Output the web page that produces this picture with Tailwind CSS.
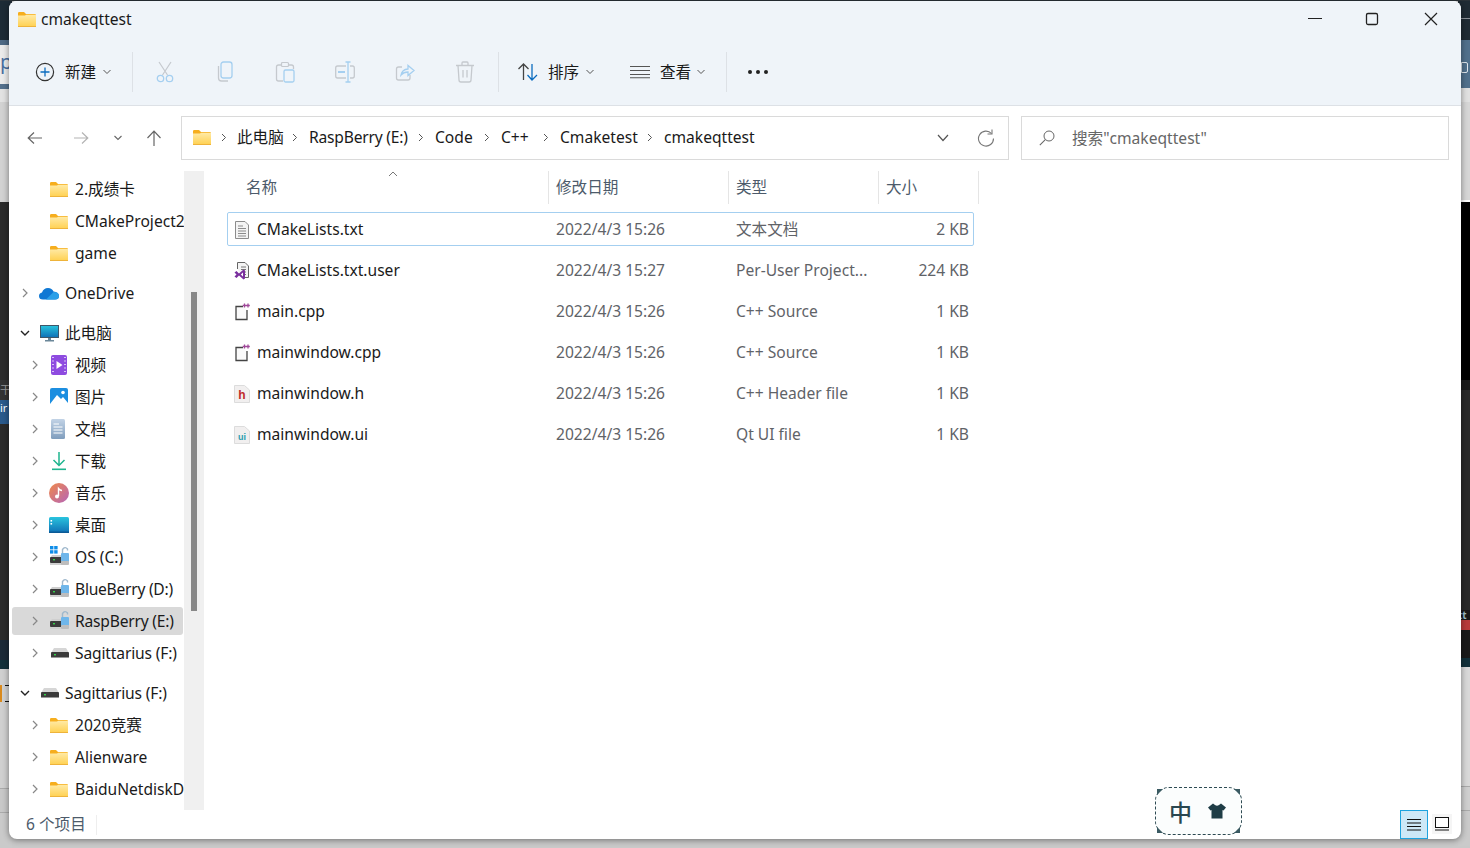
<!DOCTYPE html>
<html lang="zh">
<head>
<meta charset="utf-8">
<title>cmakeqttest</title>
<script src="https://cdn.jsdelivr.net/npm/@tailwindcss/browser@4"></script>
</head>
<body class="m-0 overflow-hidden">
<svg width="0" height="0" class="absolute">
  <defs>
    <linearGradient id="fold" x1="0" y1="0" x2="0" y2="1"><stop offset="0" stop-color="#ffeaa6"/><stop offset="1" stop-color="#ffd04f"/></linearGradient>
    <linearGradient id="scr" x1="0" y1="0" x2="0" y2="1"><stop offset="0" stop-color="#29c4de"/><stop offset="1" stop-color="#0f6fb5"/></linearGradient>
    <linearGradient id="mus" x1="0" y1="0" x2="1" y2="1"><stop offset="0" stop-color="#f0894a"/><stop offset="1" stop-color="#b565b8"/></linearGradient>
    <linearGradient id="doc" x1="0" y1="0" x2="0" y2="1"><stop offset="0" stop-color="#c2d3e6"/><stop offset="1" stop-color="#7f9dbd"/></linearGradient>
    <symbol id="folder" viewBox="0 0 18 15">
      <path d="M0 1.2Q0 0 1.2 0H6L8 2H16.8Q18 2 18 3.2V5H0Z" fill="#f6ae1e"/>
      <path d="M0 3.5H7L8.2 2.8H18V13.8Q18 15 16.8 15H1.2Q0 15 0 13.8Z" fill="url(#fold)"/>
      <rect x="0" y="14" width="18" height="1" fill="#eeb33a"/>
    </symbol>
    <symbol id="drive" viewBox="0 0 18 10">
      <path d="M3 0H15L18 5H0Z" fill="#d6d6d6"/>
      <rect x="0" y="4" width="18" height="6" rx="1" fill="#3b3b3b"/>
      <rect x="3" y="6" width="2" height="1.4" fill="#35d04a"/>
      <rect x="0" y="9" width="18" height="1" fill="#999"/>
    </symbol>
    <symbol id="lock" viewBox="0 0 20 20">
      <path d="M2 9H16L18 12V19H0V12Z" fill="#cfcfcf"/>
      <rect x="0" y="11" width="14" height="6" rx="1" fill="#3b3b3b"/>
      <rect x="3" y="13" width="2" height="1.4" fill="#35d04a"/>
      <rect x="11" y="7" width="8" height="9" rx="1" fill="#6fb6ea"/>
      <rect x="11" y="15" width="8" height="4" rx="1" fill="#bdbdbd"/>
      <path d="M12.5 7V3.5Q15 0 17.5 3V4.5" fill="none" stroke="#9fb8cc" stroke-width="1.4"/>
    </symbol>
  </defs>
</svg>

<div class="relative w-[1470px] h-[848px] overflow-hidden bg-[#c9c9c9] font-['Noto_Sans','Noto_Sans_CJK_SC',sans-serif]">
  <!-- desktop behind the window -->
  <div class="absolute inset-0 flex justify-between">
    <div class="w-[12px] flex flex-col overflow-hidden">
      <div class="h-[40px] bg-[#1d2b36]"></div>
      <div class="h-[5px] bg-[#4f6a85]"></div>
      <div class="h-[39px] bg-[#ebebeb] text-[20px] leading-[34px] text-[#4a6fa0]">p</div>
      <div class="h-[5px] bg-[#54708c]"></div>
      <div class="h-[13px] bg-[#e2e2e2]"></div>
      <div class="h-[100px] bg-[#d2d2d2]"></div>
      <div class="h-[178px] bg-[#2b2b2b]"></div>
      <div class="h-[20px] bg-[#333] text-[#999] text-[11px] leading-[20px]">干</div>
      <div class="h-[24px] bg-[#2a5a8c] text-white text-[11px] leading-[16px]">ir</div>
      <div class="h-[216px] bg-[#2b2b2b]"></div>
      <div class="h-[20px] bg-[#1c2a38]"></div>
      <div class="h-[9px] bg-[#12303a]"></div>
      <div class="h-[119px] bg-[#d0d0d0] pt-[16px] flex items-start">
        <div class="w-[2px] h-[17px] bg-[#d98a1e]"></div>
        <div class="ml-[3px] w-[4px] h-[17px] border-y border-[#111]"></div>
      </div>
      <div class="h-[25px] bg-[#c8c8c8] border-y border-[#aaaaaa]"></div>
      <div class="h-[35px] bg-[#cacaca]"></div>
    </div>
    <div class="w-[12px] flex flex-col overflow-hidden">
      <div class="h-[19px] bg-[#1f2b34] border-b border-[#8a9097]"></div>
      <div class="h-[21px] bg-[#1f2b34]"></div>
      <div class="h-[48px] bg-[#51708c] pt-[22px] pl-[3px]">
        <div class="w-[7px] h-[11px] border border-[#dfe6ec] rounded-r-[2px]"></div>
      </div>
      <div class="h-[14px] bg-[#e0e0e0]"></div>
      <div class="h-[98px] bg-[#d6d6d6]"></div>
      <div class="h-[2px] bg-white"></div>
      <div class="h-[178px] bg-black"></div>
      <div class="h-[10px] bg-[#1a1a1a]"></div>
      <div class="h-[220px] bg-[#2a2a2a]"></div>
      <div class="h-[10px] bg-[#1a1a1a] text-[#9fc0d0] text-[10px] leading-[10px] font-bold">tt</div>
      <div class="h-[10px] bg-[#b83a3a]"></div>
      <div class="h-[28px] bg-[#1a1a1a]"></div>
      <div class="h-[9px] bg-[#12303a]"></div>
      <div class="h-[119px] bg-[#d8d8d8]"></div>
      <div class="h-[25px] bg-[#cfcfcf] border-y border-[#aaaaaa]"></div>
      <div class="h-[35px] bg-[#cacaca]"></div>
    </div>
  </div>
  <div class="absolute left-0 top-0 w-full h-[1px] bg-[#2a3238]"></div>

  <!-- window -->
  <div class="absolute left-[9px] top-[1px] w-[1452px] h-[838px] rounded-lg overflow-hidden bg-white flex flex-col shadow-[0_1px_6px_rgba(0,0,0,0.45)] text-[15.6px] text-[#1a1a1a]">
    <!-- header -->
    <div class="h-[105px] shrink-0 bg-[#eff4f9] border-b border-[#dde1e6] flex flex-col">
      <div class="h-[36px] flex items-center">
        <svg class="ml-[9px] w-[18px] h-[15px]"><use href="#folder"/></svg>
        <span class="ml-[5px] leading-[17px]">cmakeqttest</span>
        <div class="ml-auto flex items-center h-[36px]">
          <svg class="w-[60px] h-[36px]" viewBox="0 0 60 36"><path d="M25 17.5H39" stroke="#222" stroke-width="1.2"/></svg>
          <svg class="w-[58px] h-[36px]" viewBox="0 0 58 36"><rect x="23.5" y="12.5" width="11" height="11" rx="1.5" fill="none" stroke="#222" stroke-width="1.3"/></svg>
          <svg class="w-[60px] h-[36px] mr-0" viewBox="0 0 60 36"><path d="M24 12L36 24M36 12L24 24" stroke="#222" stroke-width="1.2"/></svg>
        </div>
      </div>
      <div class="flex-1 flex items-center pt-[2px]">
        <!-- new -->
        <div class="flex items-center w-[123px] pl-[26px] whitespace-nowrap">
          <svg class="w-[20px] h-[20px]" viewBox="0 0 20 20"><circle cx="10" cy="10" r="8.6" fill="none" stroke="#333" stroke-width="1.2"/><path d="M10 5.5V14.5M5.5 10H14.5" stroke="#0b6cbf" stroke-width="1.3"/></svg>
          <span class="ml-[10px] leading-[17px]">新建</span>
          <svg class="ml-[6px] w-[10px] h-[6px]" viewBox="0 0 10 6"><path d="M1.5 1L5 4.5L8.5 1" fill="none" stroke="#555" stroke-width="1"/></svg>
        </div>
        <div class="w-px h-[40px] bg-[#dde1e6]"></div>
        <!-- disabled actions -->
        <div class="flex ml-[2px]">
          <div class="w-[60px] flex justify-center"><svg class="w-[20px] h-[22px]" viewBox="0 0 20 22"><path d="M4 1L12.5 14M16 1L7.5 14" stroke="#c5c9ce" stroke-width="1.2" fill="none"/><circle cx="5.5" cy="17.5" r="3.2" fill="none" stroke="#a5cff0" stroke-width="1.3"/><circle cx="14.5" cy="17.5" r="3.2" fill="none" stroke="#a5cff0" stroke-width="1.3"/></svg></div>
          <div class="w-[60px] flex justify-center"><svg class="w-[20px] h-[22px]" viewBox="0 0 20 22"><path d="M3.5 5V17Q3.5 20 6.5 20H13" fill="none" stroke="#c5c9ce" stroke-width="1.3"/><rect x="6" y="1" width="11" height="16" rx="2.5" fill="none" stroke="#a5cff0" stroke-width="1.3"/></svg></div>
          <div class="w-[60px] flex justify-center"><svg class="w-[20px] h-[22px]" viewBox="0 0 20 22"><path d="M7 4H3.5Q1.5 4 1.5 6V18Q1.5 20 3.5 20H8M13 4H16.5Q18.5 4 18.5 6V8" fill="none" stroke="#c5c9ce" stroke-width="1.3"/><rect x="6.5" y="1.5" width="7" height="4" rx="1" fill="none" stroke="#c5c9ce" stroke-width="1.2"/><rect x="9" y="9" width="10" height="12" rx="1.5" fill="none" stroke="#a5cff0" stroke-width="1.3"/></svg></div>
          <div class="w-[60px] flex justify-center"><svg class="w-[20px] h-[22px]" viewBox="0 0 20 22"><path d="M11 5H2.5Q0.7 5 0.7 7V15Q0.7 17 2.5 17H11M15 5H17.5Q19.3 5 19.3 7V15Q19.3 17 17.5 17H15" fill="none" stroke="#c5c9ce" stroke-width="1.3"/><path d="M13 1V21M10.5 1H15.5M10.5 21H15.5" stroke="#a5cff0" stroke-width="1.3" fill="none"/><rect x="3" y="10" width="7" height="2" fill="#a5cff0"/></svg></div>
          <div class="w-[60px] flex justify-center"><svg class="w-[20px] h-[22px]" viewBox="0 0 20 22"><path d="M7 6H3.5Q1.5 6 1.5 8V17Q1.5 19 3.5 19H13Q15 19 15 17V14" fill="none" stroke="#c5c9ce" stroke-width="1.3"/><path d="M6 14Q7 8.5 13 8V4.5L19 9.5L13 14.5V11Q8.5 11 6 14Z" fill="none" stroke="#a5cff0" stroke-width="1.3"/></svg></div>
          <div class="w-[60px] flex justify-center"><svg class="w-[20px] h-[22px]" viewBox="0 0 20 22"><path d="M1 4.5H19M7 4.5V2Q7 1 8 1H12Q13 1 13 2V4.5M3 4.5L4 19Q4 21 6 21H14Q16 21 16 19L17 4.5M8 9V16.5M12 9V16.5" fill="none" stroke="#c5c9ce" stroke-width="1.3"/></svg></div>
        </div>
        <div class="ml-[3px] w-px h-[40px] bg-[#dde1e6]"></div>
        <!-- sort -->
        <div class="flex items-center w-[227px] pl-[18px] whitespace-nowrap">
          <svg class="w-[22px] h-[20px]" viewBox="0 0 22 20"><path d="M6.5 18V2M1.5 7L6.5 2L11.5 7" fill="none" stroke="#444" stroke-width="1.3"/><path d="M15 2V18M10.5 13L15 18L20 13" fill="none" stroke="#0b6cbf" stroke-width="1.3"/></svg>
          <span class="ml-[9px] w-[31px] leading-[17px]">排序</span>
          <svg class="ml-[6px] w-[10px] h-[6px]" viewBox="0 0 10 6"><path d="M1.5 1L5 4.5L8.5 1" fill="none" stroke="#555" stroke-width="1"/></svg>
          <svg class="ml-[35px] w-[20px] h-[14px]" viewBox="0 0 20 14"><path d="M0 1.5H20M0 5.5H20M0 9.5H20M0 12.8H20" stroke="#555" stroke-width="1.1"/></svg>
          <span class="ml-[10px] w-[31px] leading-[17px]">查看</span>
          <svg class="ml-[5px] w-[10px] h-[6px]" viewBox="0 0 10 6"><path d="M1.5 1L5 4.5L8.5 1" fill="none" stroke="#555" stroke-width="1"/></svg>
        </div>
        <div class="w-px h-[40px] bg-[#dde1e6]"></div>
        <svg class="ml-[20px] w-[22px] h-[6px]" viewBox="0 0 22 6"><circle cx="3" cy="3" r="2" fill="#222"/><circle cx="11" cy="3" r="2" fill="#222"/><circle cx="19" cy="3" r="2" fill="#222"/></svg>
      </div>
    </div>

    <!-- address row -->
    <div class="h-[65px] shrink-0 flex items-start pt-[10px]">
      <div class="w-[172px] h-[44px] flex items-center">
        <svg class="ml-[18px] w-[16px] h-[14px]" viewBox="0 0 16 14"><path d="M15 7H1.5M7 1.5L1.2 7L7 12.5" fill="none" stroke="#666" stroke-width="1.2"/></svg>
        <svg class="ml-[30px] w-[16px] h-[14px]" viewBox="0 0 16 14"><path d="M1 7H14.5M9 1.5L14.8 7L9 12.5" fill="none" stroke="#b4b4b4" stroke-width="1.2"/></svg>
        <svg class="ml-[24px] w-[10px] h-[6px]" viewBox="0 0 10 6"><path d="M1.5 1L5 4.5L8.5 1" fill="none" stroke="#666" stroke-width="1.1"/></svg>
        <svg class="ml-[23px] w-[16px] h-[16px]" viewBox="0 0 16 16"><path d="M8 16V1.5M1.5 8L8 1.2L14.5 8" fill="none" stroke="#666" stroke-width="1.2"/></svg>
      </div>
      <div class="w-[828px] h-[44px] border border-[#dadada] flex items-center pl-[11px] pb-[1px] leading-[17px] whitespace-nowrap">
        <svg class="w-[18px] h-[15px] mr-[10px]"><use href="#folder"/></svg>
        <svg class="w-[6px] h-[9px] mr-[10px]" viewBox="0 0 6 9"><path d="M1 1L4.5 4.5L1 8" fill="none" stroke="#555" stroke-width="1"/></svg>
        <span class="w-[50px]">此电脑</span>
        <svg class="w-[6px] h-[9px] mr-[11px] ml-[5px]" viewBox="0 0 6 9"><path d="M1 1L4.5 4.5L1 8" fill="none" stroke="#555" stroke-width="1"/></svg>
        <span class="w-[104px] tracking-[-0.2px]">RaspBerry (E:)</span>
        <svg class="w-[6px] h-[9px] mr-[11px] ml-[5px]" viewBox="0 0 6 9"><path d="M1 1L4.5 4.5L1 8" fill="none" stroke="#555" stroke-width="1"/></svg>
        <span class="w-[44px]">Code</span>
        <svg class="w-[6px] h-[9px] mr-[11px] ml-[5px]" viewBox="0 0 6 9"><path d="M1 1L4.5 4.5L1 8" fill="none" stroke="#555" stroke-width="1"/></svg>
        <span class="w-[37px]">C++</span>
        <svg class="w-[6px] h-[9px] mr-[11px] ml-[5px]" viewBox="0 0 6 9"><path d="M1 1L4.5 4.5L1 8" fill="none" stroke="#555" stroke-width="1"/></svg>
        <span class="w-[82px]">Cmaketest</span>
        <svg class="w-[6px] h-[9px] mr-[11px] ml-[5px]" viewBox="0 0 6 9"><path d="M1 1L4.5 4.5L1 8" fill="none" stroke="#555" stroke-width="1"/></svg>
        <span>cmakeqttest</span>
        <svg class="ml-auto w-[12px] h-[8px]" viewBox="0 0 12 8"><path d="M1 1L6 6.5L11 1" fill="none" stroke="#555" stroke-width="1.2"/></svg>
        <svg class="ml-[28px] mr-[13px] w-[18px] h-[18px]" viewBox="0 0 18 18"><path d="M14.5 4.5A7.5 7.5 0 1 0 16.5 9.5" fill="none" stroke="#777" stroke-width="1.1"/><path d="M15 0.5V5H10.5" fill="none" stroke="#777" stroke-width="1.1"/></svg>
      </div>
      <div class="ml-[12px] w-[428px] h-[44px] border border-[#dadada] flex items-center pl-[17px] text-[#666] leading-[17px]">
        <svg class="w-[16px] h-[16px]" viewBox="0 0 16 16"><circle cx="10" cy="6" r="5" fill="none" stroke="#666" stroke-width="1"/><path d="M6.3 9.7L0.8 15.2" stroke="#666" stroke-width="1.1"/></svg>
        <span class="ml-[17px]">搜索"cmakeqttest"</span>
      </div>
    </div>

    <!-- main -->
    <div class="h-[639px] shrink-0 flex">
      <!-- sidebar -->
      <div class="w-[175px] shrink-0 overflow-hidden pt-[2px] flex flex-col whitespace-nowrap leading-[17px]">
        <div class="h-[32px] flex items-center pl-[41px]"><svg class="w-[18px] h-[15px] mr-[7px] shrink-0"><use href="#folder"/></svg>2.成绩卡</div>
        <div class="h-[32px] flex items-center pl-[41px]"><svg class="w-[18px] h-[15px] mr-[7px] shrink-0"><use href="#folder"/></svg>CMakeProject2</div>
        <div class="h-[32px] flex items-center pl-[41px]"><svg class="w-[18px] h-[15px] mr-[7px] shrink-0"><use href="#folder"/></svg>game</div>

        <div class="h-[32px] mt-[8px] flex items-center pl-[13px]">
          <svg class="w-[6px] h-[10px] mr-[11px] shrink-0" viewBox="0 0 6 10"><path d="M1 1L5 5L1 9" fill="none" stroke="#888" stroke-width="1.2"/></svg>
          <svg class="w-[20px] h-[13px] mr-[6px] shrink-0" viewBox="0 0 20 13"><path d="M4 12.5Q0 12.5 0 9Q0 6 3 5.5Q4.5 1 9 1Q13 1 14.5 4.5Q20 5 20 9Q20 12.5 16 12.5Z" fill="#0f78d4"/><path d="M7 12.5L14.5 5Q20 5 20 9Q20 12.5 16 12.5Z" fill="#2a9fe8"/></svg>OneDrive
        </div>

        <div class="h-[32px] mt-[8px] flex items-center pl-[11px]">
          <svg class="w-[10px] h-[6px] mr-[10px] shrink-0" viewBox="0 0 10 6"><path d="M1 1L5 5L9 1" fill="none" stroke="#222" stroke-width="1.4"/></svg>
          <svg class="w-[19px] h-[17px] mr-[6px] shrink-0" viewBox="0 0 19 17"><rect x="0.5" y="0.5" width="18" height="12" fill="url(#scr)" stroke="#3f5668"/><rect x="8" y="13" width="3" height="2" fill="#6b8799"/><rect x="5" y="15" width="9" height="1.5" fill="#6b8799"/></svg>此电脑
        </div>
        <div class="h-[32px] flex items-center pl-[23px]">
          <svg class="w-[6px] h-[10px] mr-[12px] shrink-0" viewBox="0 0 6 10"><path d="M1 1L5 5L1 9" fill="none" stroke="#888" stroke-width="1.2"/></svg>
          <svg class="w-[16px] h-[20px] mr-[8px] ml-[1px] shrink-0" viewBox="0 0 16 20"><rect width="16" height="20" rx="2" fill="#8e4be0"/><path d="M5.5 6L11.5 10L5.5 14Z" fill="#fff"/><path d="M1 2.5H3M1 6H3M1 9.5H3M1 13H3M1 16.5H3M13 2.5H15M13 6H15M13 9.5H15M13 13H15M13 16.5H15" stroke="#d8c2f7" stroke-width="1.2"/></svg>视频
        </div>
        <div class="h-[32px] flex items-center pl-[23px]">
          <svg class="w-[6px] h-[10px] mr-[12px] shrink-0" viewBox="0 0 6 10"><path d="M1 1L5 5L1 9" fill="none" stroke="#888" stroke-width="1.2"/></svg>
          <svg class="w-[18px] h-[18px] mr-[7px] shrink-0" viewBox="0 0 18 18"><rect width="18" height="18" rx="2" fill="#1c8ee0"/><path d="M0 16L7 7L11 11L13 9L18 15V18H0Z" fill="#fff"/><circle cx="13" cy="4.5" r="1.8" fill="#fff"/></svg>图片
        </div>
        <div class="h-[32px] flex items-center pl-[23px]">
          <svg class="w-[6px] h-[10px] mr-[13px] shrink-0" viewBox="0 0 6 10"><path d="M1 1L5 5L1 9" fill="none" stroke="#888" stroke-width="1.2"/></svg>
          <svg class="w-[14px] h-[20px] mr-[10px] shrink-0" viewBox="0 0 14 20"><rect width="14" height="20" rx="1.5" fill="url(#doc)"/><path d="M2.5 5H8M2.5 8H11.5M2.5 11H11.5M2.5 14H11.5" stroke="#fff" stroke-width="1"/></svg>文档
        </div>
        <div class="h-[32px] flex items-center pl-[23px]">
          <svg class="w-[6px] h-[10px] mr-[14px] shrink-0" viewBox="0 0 6 10"><path d="M1 1L5 5L1 9" fill="none" stroke="#888" stroke-width="1.2"/></svg>
          <svg class="w-[14px] h-[20px] mr-[9px] shrink-0" viewBox="0 0 14 20"><path d="M7 1V14M1.5 9L7 14.5L12.5 9" fill="none" stroke="#1fb58f" stroke-width="1.5"/><rect y="17.5" width="14" height="1.6" fill="#1fb58f"/></svg>下载
        </div>
        <div class="h-[32px] flex items-center pl-[23px]">
          <svg class="w-[6px] h-[10px] mr-[11px] shrink-0" viewBox="0 0 6 10"><path d="M1 1L5 5L1 9" fill="none" stroke="#888" stroke-width="1.2"/></svg>
          <svg class="w-[20px] h-[20px] mr-[6px] shrink-0" viewBox="0 0 20 20"><circle cx="10" cy="10" r="10" fill="url(#mus)"/><path d="M9.5 13V5.5Q11 7.5 13 7.5" fill="none" stroke="#fff" stroke-width="1.4"/><circle cx="8" cy="13.5" r="2" fill="#fff"/></svg>音乐
        </div>
        <div class="h-[32px] flex items-center pl-[23px]">
          <svg class="w-[6px] h-[10px] mr-[11px] shrink-0" viewBox="0 0 6 10"><path d="M1 1L5 5L1 9" fill="none" stroke="#888" stroke-width="1.2"/></svg>
          <svg class="w-[20px] h-[16px] mr-[6px] shrink-0" viewBox="0 0 20 16"><rect width="20" height="16" rx="1.5" fill="url(#scr)"/><rect x="1.5" y="3" width="1.6" height="1.6" fill="#fff"/><rect x="1.5" y="6" width="1.6" height="1.6" fill="#fff"/><rect y="14.5" width="20" height="1.5" fill="#0b5a96"/></svg>桌面
        </div>
        <div class="h-[32px] flex items-center pl-[23px]">
          <svg class="w-[6px] h-[10px] mr-[12px] shrink-0" viewBox="0 0 6 10"><path d="M1 1L5 5L1 9" fill="none" stroke="#888" stroke-width="1.2"/></svg>
          <svg class="w-[20px] h-[20px] mr-[5px] -mt-[3px] shrink-0" viewBox="0 0 20 20"><rect width="3.4" height="3.4" fill="#0f8de8"/><rect x="4.2" width="3.4" height="3.4" fill="#0f8de8"/><rect y="4.2" width="3.4" height="3.4" fill="#0f8de8"/><rect x="4.2" y="4.2" width="3.4" height="3.4" fill="#0f8de8"/><use href="#lock"/></svg>OS (C:)
        </div>
        <div class="h-[32px] flex items-center pl-[23px]">
          <svg class="w-[6px] h-[10px] mr-[12px] shrink-0" viewBox="0 0 6 10"><path d="M1 1L5 5L1 9" fill="none" stroke="#888" stroke-width="1.2"/></svg>
          <svg class="w-[20px] h-[20px] mr-[5px] -mt-[3px] shrink-0"><use href="#lock"/></svg><span class="tracking-[-0.25px]">BlueBerry (D:)</span>
        </div>
        <div class="h-[32px] flex items-center pl-[23px] relative">
          <div class="absolute left-[3px] top-[2px] w-[171px] h-[28px] bg-[#d9d9d9] rounded-[3px]"></div>
          <svg class="relative w-[6px] h-[10px] mr-[12px] shrink-0" viewBox="0 0 6 10"><path d="M1 1L5 5L1 9" fill="none" stroke="#888" stroke-width="1.2"/></svg>
          <svg class="relative w-[20px] h-[20px] mr-[5px] -mt-[3px] shrink-0"><use href="#lock"/></svg><span class="relative tracking-[-0.2px]">RaspBerry (E:)</span>
        </div>
        <div class="h-[32px] flex items-center pl-[23px]">
          <svg class="w-[6px] h-[10px] mr-[12px] shrink-0" viewBox="0 0 6 10"><path d="M1 1L5 5L1 9" fill="none" stroke="#888" stroke-width="1.2"/></svg>
          <svg class="w-[18px] h-[10px] mr-[6px] ml-[1px] shrink-0"><use href="#drive"/></svg><span class="tracking-[-0.15px]">Sagittarius (F:)</span>
        </div>

        <div class="h-[32px] mt-[8px] flex items-center pl-[11px]">
          <svg class="w-[10px] h-[6px] mr-[10px] shrink-0" viewBox="0 0 10 6"><path d="M1 1L5 5L9 1" fill="none" stroke="#222" stroke-width="1.4"/></svg>
          <svg class="w-[18px] h-[10px] mr-[6px] ml-[1px] shrink-0"><use href="#drive"/></svg><span class="tracking-[-0.15px]">Sagittarius (F:)</span>
        </div>
        <div class="h-[32px] flex items-center pl-[23px]">
          <svg class="w-[6px] h-[10px] mr-[12px] shrink-0" viewBox="0 0 6 10"><path d="M1 1L5 5L1 9" fill="none" stroke="#888" stroke-width="1.2"/></svg>
          <svg class="w-[18px] h-[15px] mr-[7px] shrink-0"><use href="#folder"/></svg>2020竞赛
        </div>
        <div class="h-[32px] flex items-center pl-[23px]">
          <svg class="w-[6px] h-[10px] mr-[12px] shrink-0" viewBox="0 0 6 10"><path d="M1 1L5 5L1 9" fill="none" stroke="#888" stroke-width="1.2"/></svg>
          <svg class="w-[18px] h-[15px] mr-[7px] shrink-0"><use href="#folder"/></svg>Alienware
        </div>
        <div class="h-[32px] flex items-center pl-[23px]">
          <svg class="w-[6px] h-[10px] mr-[12px] shrink-0" viewBox="0 0 6 10"><path d="M1 1L5 5L1 9" fill="none" stroke="#888" stroke-width="1.2"/></svg>
          <svg class="w-[18px] h-[15px] mr-[7px] shrink-0"><use href="#folder"/></svg>BaiduNetdiskD
        </div>
      </div>
      <!-- scrollbar -->
      <div class="w-[20px] shrink-0 bg-[#f0f0f0] pl-[7px] pt-[121px]">
        <div class="w-[6px] h-[319px] bg-[#888]"></div>
      </div>

      <!-- file list -->
      <div class="flex-1 pl-[23px] flex flex-col">
        <div class="relative h-[33px] shrink-0 flex items-center text-[#4d5b6b] leading-[17px] w-[752px]">
          <svg class="absolute left-[161px] top-[0px] w-[10px] h-[6px]" viewBox="0 0 10 6"><path d="M1 5L5 1L9 5" fill="none" stroke="#777" stroke-width="1"/></svg>
          <div class="w-[322px] h-full flex items-center pl-[19px] border-r border-[#e5e5e5] pb-[1px]">名称</div>
          <div class="w-[180px] h-full flex items-center pl-[7px] border-r border-[#e5e5e5] pb-[1px]">修改日期</div>
          <div class="w-[150px] h-full flex items-center pl-[7px] border-r border-[#e5e5e5] pb-[1px]">类型</div>
          <div class="w-[100px] h-full flex items-center pl-[7px] border-r border-[#e5e5e5] pb-[1px]">大小</div>
        </div>
        <div class="pt-[5px] flex flex-col leading-[17px]">
          <div class="h-[41px] flex items-center w-[747px]">
            <div class="w-full h-[34px] -mt-[2px] pt-[2px] border border-[#a4cff0] rounded-[2px] flex items-center text-[#5f6368] pr-[4px]">
              <svg class="ml-[6px] w-[16px] h-[18px] shrink-0" viewBox="0 0 16 18"><path d="M1.5 0.5H11L14.5 4V17.5H1.5Z" fill="#f4f4f4" stroke="#8c8c8c"/><path d="M4 5H9M4 7.5H12M4 10H12M4 12.5H12M4 15H12" stroke="#8c8c8c" stroke-width="1"/></svg>
              <span class="ml-[7px] w-[299px] text-[#1a1a1a]">CMakeLists.txt</span>
              <span class="w-[180px]">2022/4/3 15:26</span>
              <span class="w-[150px]">文本文档</span>
              <span class="flex-1 text-right">2 KB</span>
            </div>
          </div>
          <div class="h-[41px] flex items-center w-[747px] px-px text-[#5f6368] pr-[5px]">
            <svg class="ml-[6px] w-[16px] h-[18px] shrink-0" viewBox="0 0 16 18"><path d="M3.5 7V0.5H11L14.5 4V15.5H8" fill="#f4f4f4" stroke="#666"/><path d="M7 5H12M7 7.5H12M10 10H12M10 12.5H12" stroke="#777"/><path d="M0.5 10.5L2.5 9L5 11.5L9.5 7.5L11 8.5V16.5L9.5 17.5L5 13.5L2.5 16L0.5 14.5L2.5 12.5Z" fill="#7a2f9e"/><path d="M9 10.5V14.5L6.8 12.5Z" fill="#fff"/></svg>
            <span class="ml-[7px] w-[299px] text-[#1a1a1a]">CMakeLists.txt.user</span>
            <span class="w-[180px]">2022/4/3 15:27</span>
            <span class="w-[150px] whitespace-nowrap">Per-User Project...</span>
            <span class="flex-1 text-right">224 KB</span>
          </div>
          <div class="h-[41px] flex items-center w-[747px] px-px text-[#5f6368] pr-[5px]">
            <svg class="ml-[6px] w-[16px] h-[18px] shrink-0" viewBox="0 0 16 18"><path d="M9 3.5H2V16.5H13V7" fill="#fafafa" stroke="#444" stroke-width="1.3"/><path d="M10.5 0.5V4.5M8.7 2.5H12.3M14 0.5V4.5M12.3 2.5H15.8" stroke="#a0489a" stroke-width="1.3"/></svg>
            <span class="ml-[7px] w-[299px] text-[#1a1a1a]">main.cpp</span>
            <span class="w-[180px]">2022/4/3 15:26</span>
            <span class="w-[150px]">C++ Source</span>
            <span class="flex-1 text-right">1 KB</span>
          </div>
          <div class="h-[41px] flex items-center w-[747px] px-px text-[#5f6368] pr-[5px]">
            <svg class="ml-[6px] w-[16px] h-[18px] shrink-0" viewBox="0 0 16 18"><path d="M9 3.5H2V16.5H13V7" fill="#fafafa" stroke="#444" stroke-width="1.3"/><path d="M10.5 0.5V4.5M8.7 2.5H12.3M14 0.5V4.5M12.3 2.5H15.8" stroke="#a0489a" stroke-width="1.3"/></svg>
            <span class="ml-[7px] w-[299px] text-[#1a1a1a]">mainwindow.cpp</span>
            <span class="w-[180px]">2022/4/3 15:26</span>
            <span class="w-[150px]">C++ Source</span>
            <span class="flex-1 text-right">1 KB</span>
          </div>
          <div class="h-[41px] flex items-center w-[747px] px-px text-[#5f6368] pr-[5px]">
            <svg class="ml-[6px] w-[16px] h-[18px] shrink-0" viewBox="0 0 16 18"><path d="M0.5 0.5H10.5L15.5 5V17.5H0.5Z" fill="#f1efef" stroke="#dcdcdc"/><text x="8" y="14" text-anchor="middle" font-family="Liberation Sans" font-size="12" font-weight="700" fill="#c02a2a">h</text></svg>
            <span class="ml-[7px] w-[299px] text-[#1a1a1a]">mainwindow.h</span>
            <span class="w-[180px]">2022/4/3 15:26</span>
            <span class="w-[150px]">C++ Header file</span>
            <span class="flex-1 text-right">1 KB</span>
          </div>
          <div class="h-[41px] flex items-center w-[747px] px-px text-[#5f6368] pr-[5px]">
            <svg class="ml-[6px] w-[16px] h-[18px] shrink-0" viewBox="0 0 16 18"><path d="M0.5 0.5H10.5L15.5 5V17.5H0.5Z" fill="#f1efef" stroke="#dcdcdc"/><text x="8" y="13.5" text-anchor="middle" font-family="Liberation Sans" font-size="9" font-weight="700" fill="#2b9db0">ui</text></svg>
            <span class="ml-[7px] w-[299px] text-[#1a1a1a]">mainwindow.ui</span>
            <span class="w-[180px]">2022/4/3 15:26</span>
            <span class="w-[150px]">Qt UI file</span>
            <span class="flex-1 text-right">1 KB</span>
          </div>
        </div>
      </div>
    </div>

    <!-- status bar -->
    <div class="flex-1 flex items-center pl-[17px] text-[#4d5b6b] leading-[17px]">
      <span class="w-[70px]">6 个项目</span>
      <div class="w-px h-[20px] bg-[#eeeeee]"></div>
      <div class="ml-auto flex items-end self-stretch">
        <div class="w-[28px] h-[29px] bg-[#cde8f7] border border-[#1ea3df] flex items-center justify-center">
          <svg class="w-[14px] h-[12px]" viewBox="0 0 14 12"><path d="M0 0.5H14M0 4H14M0 7.5H14M0 11H14" stroke="#111" stroke-width="1"/></svg>
        </div>
        <div class="ml-[4px] mr-[9px] mb-[5px] w-[20px] h-[20px] bg-[#f5f5f5] flex items-center justify-center">
          <svg class="w-[14px] h-[14px]" viewBox="0 0 14 14"><rect x="0.5" y="0.5" width="13" height="10" fill="#fff" stroke="#111"/><path d="M0 13H14" stroke="#111"/></svg>
        </div>
      </div>
    </div>
  </div>

  <!-- floating IME badge -->
  <div class="absolute left-[1155px] top-[787px] w-[87px] h-[48px] rounded-[14px] border border-dashed border-[#2d4a52] bg-[#fbfdfd] flex items-center pl-[13px]">
    <span class="text-[#2a4750] text-[23px] leading-none font-['Noto_Sans_CJK_SC',sans-serif] font-medium">中</span>
    <svg class="ml-[16px] w-[18px] h-[16px]" viewBox="0 0 18 16"><path d="M5 0.5L7 2Q9 3.5 11 2L13 0.5L18 4.5L15.5 7.5L14.5 7V15.5H3.5V7L2.5 7.5L0 4.5Z" fill="#1f3d46"/></svg>
    <div class="absolute left-[1px] top-[1px] w-0 h-0 border-t-[6px] border-r-[6px] border-t-[#3a5a62] border-r-transparent"></div>
    <div class="absolute right-[1px] top-[1px] w-0 h-0 border-t-[6px] border-l-[6px] border-t-[#3a5a62] border-l-transparent"></div>
    <div class="absolute left-[1px] bottom-[1px] w-0 h-0 border-b-[6px] border-r-[6px] border-b-[#3a5a62] border-r-transparent"></div>
    <div class="absolute right-[1px] bottom-[1px] w-0 h-0 border-b-[6px] border-l-[6px] border-b-[#3a5a62] border-l-transparent"></div>
  </div>
</div>
</body>
</html>
